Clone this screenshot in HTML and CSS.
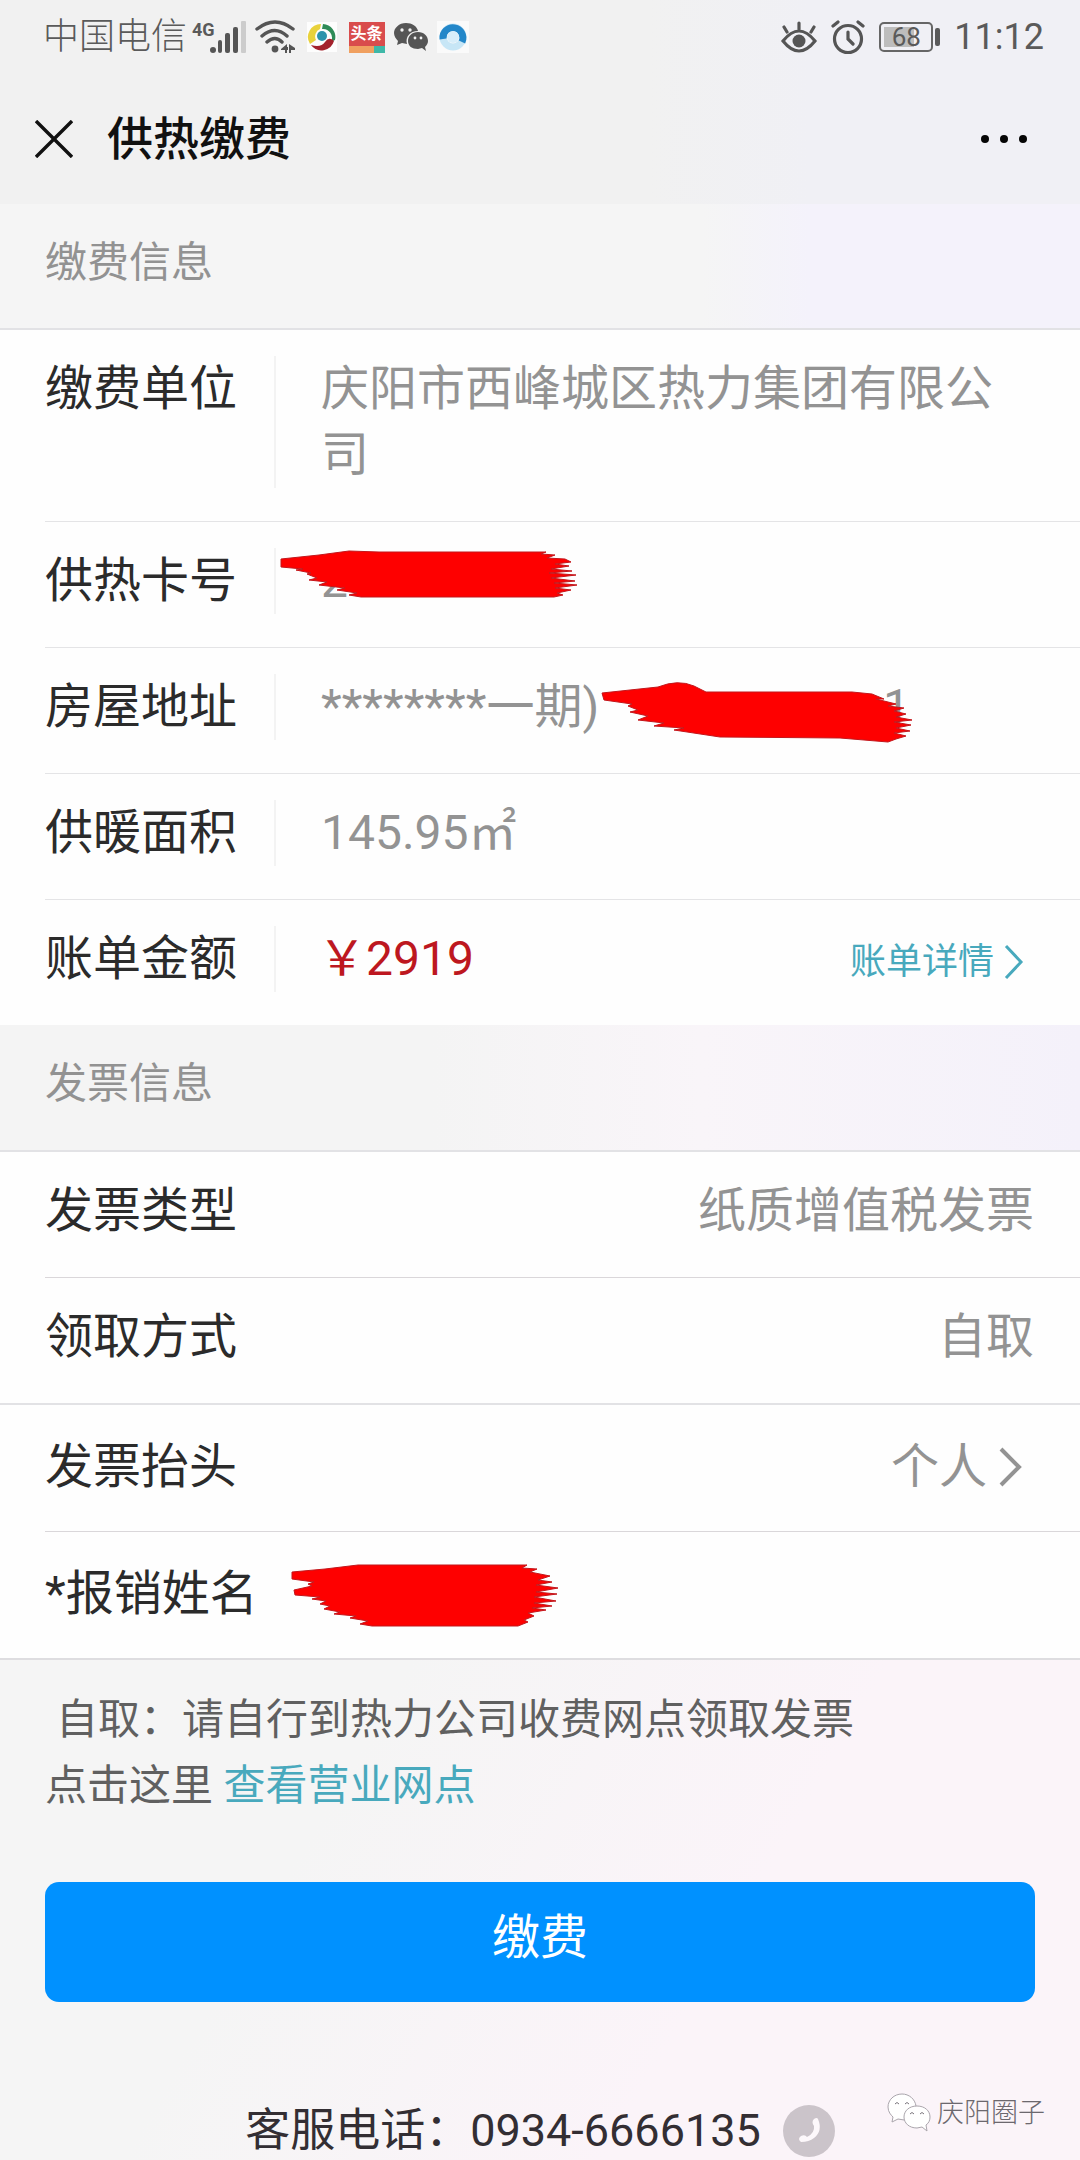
FILE: index.html
```html
<!DOCTYPE html>
<html lang="zh-CN">
<head>
<meta charset="utf-8">
<meta name="viewport" content="width=device-width, initial-scale=1">
<title>供热缴费</title>
<link rel="stylesheet" href="styles.css">
</head>
<body>
<div class="page">
  <header class="top">
    <div class="status">
      <div class="status-left">
        <span class="carrier">中国电信</span>
        <span class="signal">
          <span class="net">4G</span>
          <svg class="bars" width="36" height="34" viewBox="0 0 36 34" fill="#555">
            <circle cx="3" cy="30" r="3"/><rect x="8" y="20" width="4" height="13" rx="2"/><rect x="15" y="13" width="5" height="20" rx="2"/><rect x="23" y="7" width="5" height="26" rx="2"/><rect x="31" y="1" width="5" height="32" rx="1" fill="#ccc"/>
          </svg>
        </span>
        <svg class="wifi" width="40" height="34" viewBox="0 0 40 34" fill="none" stroke="#555" stroke-width="3.4" stroke-linecap="round">
          <path d="M2 9Q20-5 38 9M7 16Q20 5 32 16M12 22Q20 15 27 22"/>
          <circle cx="20" cy="29" r="3.4" fill="#555" stroke="none"/>
          <path fill="#555" stroke="none" d="M26 29l6-5v3h1v3h-1v3h-2v-3h-4zM34 24l6 4v2h-4v3h-2z"/>
        </svg>
        <svg class="app" width="30" height="30" viewBox="0 0 30 30">
          <rect width="30" height="30" fill="#fdfdfd"/>
          <path d="M14 2A13 13 0 0 0 3 22L9 18A8 8 0 0 1 13 7z" fill="#e9d23c"/>
          <path d="M16 2A13 13 0 0 1 28 18L24 20A9 9 0 0 0 15 7z" fill="#2e8b57"/>
          <path d="M4 23Q14 26 18 20T27 19A13 13 0 0 1 4 23z" fill="#a3222c"/>
          <circle cx="15" cy="14" r="5" fill="#2d93ab"/>
        </svg>
        <span class="news"><b>头条</b><i></i></span>
        <svg width="34" height="30" viewBox="0 0 34 30">
          <path fill="#555" d="M12 1C5 1 0 6 0 11c0 3 2 6 4 8l-1 4 5-2 5 1c-2-7 3-13 11-13C23 4 18 1 12 1z"/>
          <path fill="#555" d="M24 10c-6 0-10 4-10 9s4 8 10 8l4-1 4 3-1-4c2-2 3-4 3-6 0-5-4-9-10-9z"/>
          <g fill="#f1f1f1"><circle cx="8" cy="8" r="1.7"/><circle cx="16" cy="8" r="1.7"/><circle cx="21" cy="16" r="1.4"/><circle cx="27" cy="16" r="1.4"/></g>
        </svg>
        <svg class="browser" width="32" height="32" viewBox="0 0 32 32">
          <rect width="32" height="32" fill="#fafafa"/>
          <circle cx="16" cy="16" r="10" fill="none" stroke="#c7e6f6" stroke-width="7"/>
          <path d="M6 18A10 10 0 1 1 25 21" fill="none" stroke="#2387c9" stroke-width="7"/>
          <circle cx="16" cy="16" r="6" fill="#d8eefa"/>
        </svg>
      </div>
      <div class="status-right">
        <svg width="36" height="34" viewBox="0 0 36 34" fill="none" stroke="#555" stroke-width="3.2" stroke-linecap="round">
          <path d="M2 21Q18 1 34 21Q18 41 2 21zM18 9V3M6 12L3 7M30 12l3-5"/><circle cx="18" cy="21" r="6.5" fill="#555" stroke="none"/>
        </svg>
        <svg width="34" height="36" viewBox="0 0 34 36" fill="none" stroke="#555" stroke-width="3.2" stroke-linecap="round">
          <circle cx="17" cy="20" r="13.5"/><path d="M17 13v7l5 5M2 7l5-4M32 7l-5-4"/>
        </svg>
        <span class="battery"><span class="cell"><span class="fill"></span><span class="level">68</span></span><span class="nub"></span></span>
        <time class="clock">11:12</time>
      </div>
    </div>
    <nav class="nav">
      <button class="icon-btn" type="button" aria-label="关闭">
        <svg width="38" height="38" viewBox="0 0 38 38" stroke="#111" stroke-width="3.4"><path d="M1 1L37 37M37 1L1 37"/></svg>
      </button>
      <h1 class="title">供热缴费</h1>
      <button class="icon-btn" type="button" aria-label="更多">
        <svg width="46" height="10" viewBox="0 0 46 10" fill="#050505"><circle cx="4" cy="5" r="4"/><circle cx="23" cy="5" r="4"/><circle cx="42" cy="5" r="4"/></svg>
      </button>
    </nav>
  </header>

  <main>
    <h2 class="section">缴费信息</h2>
    <dl class="list">
      <div class="row">
        <dt class="label">缴费单位</dt>
        <dd class="value ruled">庆阳市西峰城区热力集团有限公司</dd>
      </div>
      <div class="row">
        <dt class="label">供热卡号</dt>
        <dd class="value ruled">2
          <svg class="mark mark-card" width="300" height="50" viewBox="0 0 300 50"><path fill="#fe0000" stroke="#c3161b" d="M2 9L40 5 70 1 100 2H267L262 4 276 5 268 8 286 9 292 12 276 14 290 16 272 19 293 21 270 23 297 25 272 28 296 31 275 33 298 35 276 38 292 40 278 43 284 45 275 47H82L70 45 78 43 58 40 66 38 40 35 48 32 30 30 38 28 28 24 32 23 17 20 24 19 2 17z"/></svg>
        </dd>
      </div>
      <div class="row">
        <dt class="label">房屋地址</dt>
        <dd class="value ruled">********一期)<span class="tail">1</span>
          <svg class="mark mark-address" width="314" height="62" viewBox="0 0 314 62"><path fill="#fe0000" stroke="#c3161b" d="M2 11L30 8 58 5Q78-3 94 4L106 10H252L272 12 284 17 276 17 296 22 288 24 304 26 294 29 306 32 296 35 312 38 294 40 311 43 296 46 310 49 294 51 306 54 296 57 288 60 240 56 120 55 74 48 84 46 54 44 64 41 38 38 48 34 30 30 38 28 28 24 32 22 4 18z"/></svg>
        </dd>
      </div>
      <div class="row">
        <dt class="label">供暖面积</dt>
        <dd class="value ruled">145.95㎡</dd>
      </div>
      <div class="row">
        <dt class="label">账单金额</dt>
        <dd class="value ruled amount">￥2919</dd>
        <dd class="action"><a class="detail" href="#detail">账单详情
          <svg width="20" height="36" viewBox="0 0 20 36" fill="none" stroke="currentColor" stroke-width="3"><path d="M2 2L17 18 2 34"/></svg></a></dd>
      </div>
    </dl>

    <h2 class="section section-warm">发票信息</h2>
    <form class="form">
      <div class="list lined">
        <div class="row"><span class="label">发票类型</span><span class="value end">纸质增值税发票</span></div>
        <div class="row"><span class="label">领取方式</span><span class="value end">自取</span></div>
      </div>
      <div class="list lined last">
        <div class="row">
          <span class="label" id="head-label">发票抬头</span>
          <button class="value end picker" type="button" aria-labelledby="head-label head-value"><span id="head-value">个人</span>
            <svg width="23" height="40" viewBox="0 0 23 40" fill="none" stroke="currentColor" stroke-width="4"><path d="M2 2L20 20 2 38"/></svg></button>
        </div>
        <div class="row">
          <label class="label" for="payee">*报销姓名</label>
          <input class="value name" id="payee" type="text">
          <svg class="mark mark-name" width="270" height="64" viewBox="0 0 270 64"><path fill="#fe0000" stroke="#c3161b" d="M2 8L35 5 68 1H237L232 4 247 5 240 8 260 12 248 16 262 18 246 21 268 24 246 28 267 30 244 33 266 37 244 39 262 42 242 44 256 46 238 49 244 52 234 56 238 58 228 62H82L70 60 78 57 60 54 66 52 44 50 50 48 34 45 40 42 30 40 36 37 22 35 30 33 5 31 4 26 22 22 18 20 24 18 2 15z"/></svg>
        </div>
      </div>

      <div class="foot">
        <p class="note"><span class="note-lead">自取：请自行到热力公司收费网点领取发票</span><br>点击这里 <a href="#outlets">查看营业网点</a></p>
        <button class="pay" type="submit">缴费</button>
        <a class="phone" href="tel:0934-6666135">客服电话：0934-6666135
          <svg width="52" height="52" viewBox="0 0 52 52"><circle cx="26" cy="26" r="26" fill="#cbc4ca"/><path d="M35 14q5 12-4 19-5 4-13 4-4-3 0-6 4-2 6 1 8-4 7-11-3-4 0-7 3-2 4 0z" fill="#fdf8fb"/></svg></a>
      </div>
    </form>
  </main>

  <div class="watermark">
    <svg width="44" height="40" viewBox="0 0 44 40" fill="#fff" stroke="#aaa5ac" stroke-width="1">
      <path d="M15 1C7 1 1 7 1 14c0 5 3 8 5 10l-1 5 6-3 6 1 12-14C28 6 22 1 15 1z"/>
      <path d="M30 13c-8 0-13 5-13 11s5 11 13 11l5-1 5 4-1-6c3-2 4-5 4-8 0-6-5-11-13-11z"/>
      <path fill="none" stroke="#77727a" d="M8 11q2-3 4 0M18 11q2-3 4 0M23 21q2-3 4 0M33 21q2-3 4 0"/>
    </svg>
    <span>庆阳圈子</span>
  </div>
</div>
</body>
</html>
```
FILE: styles.css
```css
* { box-sizing: border-box; }

body {
  margin: 0;
  background: #f5f5f5;
  color: #2b2b2b;
  font-family: Roboto, "Noto Sans CJK SC", sans-serif;
  font-size: 48px;
  line-height: 66px;
}

h1, h2, p, dl, dd { margin: 0; font-weight: 400; }
svg { display: block; flex: none; }
a { color: #48a9bd; text-decoration: none; }
button, input {
  border: 0;
  padding: 0;
  background: none;
  color: inherit;
  font: inherit;
}

.page { position: relative; min-height: 100vh; }

/* status bar and title bar */
.top { background: linear-gradient(90deg, #f1f1f1 60%, #f0f0f5 75%); }
.status {
  display: flex;
  justify-content: space-between;
  height: 74px;
  padding: 0 36px 0 43px;
  color: #5a5a5a;
  font-size: 36px;
  line-height: 76px;
}
.status-left, .status-right { display: flex; align-items: center; }
.status-left { gap: 9px; }
.status-right { gap: 14px; }
.signal { display: flex; margin-left: -4px; }
.carrier { font-weight: 300; }
.net { font-size: 18px; font-weight: 700; line-height: 20px; }
.bars { margin-left: -5px; }
.app { margin: 0 3px; }
.news {
  display: flex;
  flex-direction: column;
  width: 36px;
  background: #d94c4c;
  color: #fff;
}
.news b { font-size: 16px; line-height: 24px; text-align: center; }
.news i { height: 7px; background: linear-gradient(90deg, #f0a060 70%, #3fb8a8 70%); }
.battery { display: flex; align-items: center; gap: 2px; }
.cell {
  display: grid;
  width: 54px;
  height: 30px;
  padding: 3px;
  border: 2px solid #666;
  border-radius: 5px;
}
.fill, .level { grid-area: 1 / 1; }
.fill { width: 68%; background: #bdbdbd; }
.level { font-size: 26px; line-height: 20px; text-align: center; }
.nub { width: 5px; height: 18px; border-radius: 2px; background: #5a5a5a; }

.nav {
  display: flex;
  height: 130px;
  padding: 32px 53px 0 35px;
}
.icon-btn { display: flex; align-items: center; height: 66px; }
.title {
  flex: 1;
  margin-left: 34px;
  color: #111;
  font-size: 46px;
  font-weight: 500;
}

/* grouped rows */
.section {
  height: 124px;
  padding: 26px 45px 0;
  background: linear-gradient(90deg, #f5f5f5 65%, #f4f2fb 75%);
  color: #929292;
  font-size: 42px;
}
.section-warm {
  height: 125px;
  background: linear-gradient(90deg, #f4f4f4 40%, #f9f5f9 65%, #f4f1fa);
}
.list {
  padding-left: 45px;
  border-top: 2px solid #e2e2e5;
  background: #fefefe;
}
.row {
  position: relative;
  display: flex;
  padding: 26px 46px 33px 0;
}
.row + .row { border-top: 1px solid #e4e4e6; }
.lined .row + .row { border-color: #dad7da; }
.last { border-bottom: 2px solid #dedde0; }
.last .row { padding-top: 29px; padding-bottom: 31px; }
.label { flex: none; width: 229px; white-space: nowrap; }
.value { flex: 1; min-width: 0; color: #939393; }
.ruled {
  padding-left: 45px;
  border-left: 2px solid #f3f3f3;
}
.amount { padding-left: 42px; color: #bd1720; }
.end { text-align: right; }
.action { font-size: 36px; line-height: 72px; height: 66px; }
.detail { display: flex; align-items: center; gap: 10px; margin-right: 10px; }
.picker {
  display: flex;
  align-items: center;
  justify-content: flex-end;
  gap: 12px;
  padding-right: 12px;
}
.name { height: 66px; padding-left: 24px; outline: none; }
.tail { margin-left: 284px; }

/* brush strokes lying over private values */
.mark { position: absolute; }
.mark-card { left: 234px; top: 28px; }
.mark-address { left: 555px; top: 34px; }
.mark-name { left: 245px; top: 32px; }

/* note, submit button and hotline */
.foot {
  display: flex;
  flex-direction: column;
  padding: 27px 45px 5px;
  background: linear-gradient(120deg, #f5f5f5 30%, #fbf4f9 65%);
}
.note { color: #606060; font-size: 42px; }
.note-lead { padding-left: 11px; }
.pay {
  height: 120px;
  margin-top: 63px;
  padding-bottom: 8px;
  border-radius: 14px;
  background: #0091ff;
  color: #fff;
}
.phone {
  display: flex;
  align-items: center;
  justify-content: center;
  gap: 22px;
  margin-top: 102px;
  color: #332e33;
  font-size: 45px;
  line-height: 54px;
}

.watermark {
  position: absolute;
  right: 35px;
  bottom: 30px;
  display: flex;
  align-items: center;
  gap: 6px;
  color: #6c686e;
  font-size: 27px;
  font-weight: 300;
  line-height: 40px;
}
```
